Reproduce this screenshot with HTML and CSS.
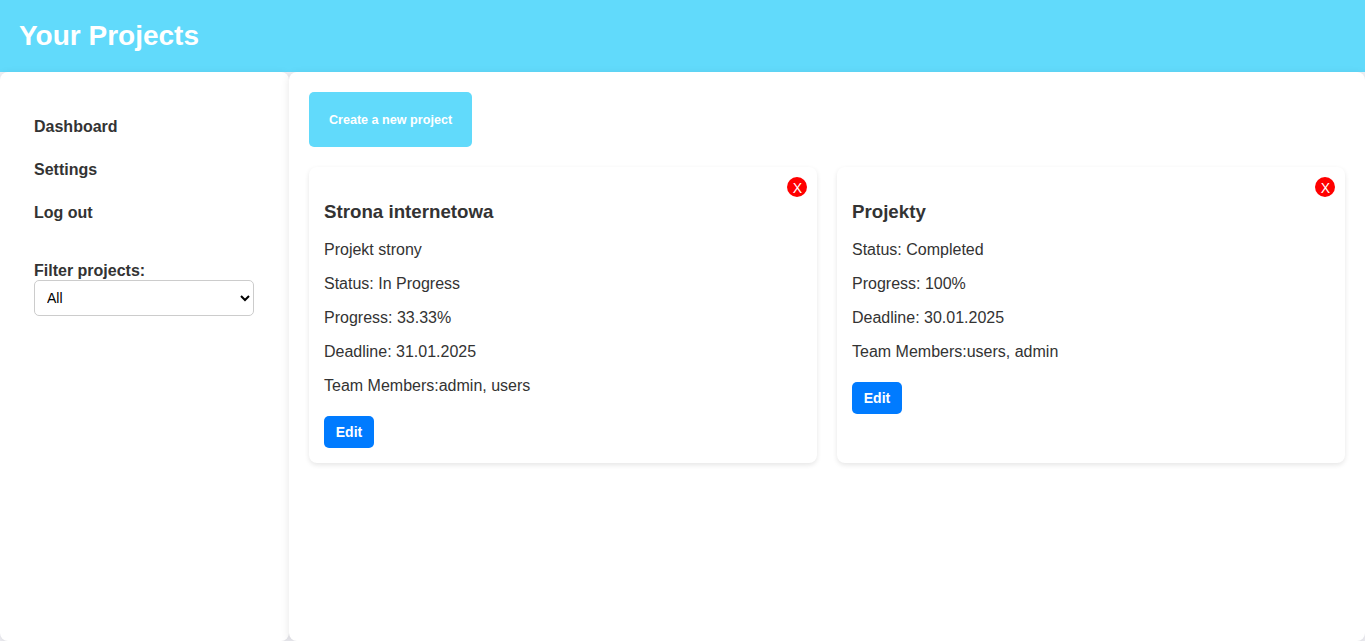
FILE: index.html
```html
<!DOCTYPE html>
<html lang="en">
<head>
<meta charset="utf-8">
<title>Your Projects</title>
<link rel="stylesheet" href="styles.css">
</head>
<body>
<header class="header"><h1>Your Projects</h1></header>
<div class="layout">
  <aside class="sidebar">
    <nav class="menu">
      <a>Dashboard</a>
      <a>Settings</a>
      <a>Log out</a>
    </nav>
    <label class="filter-label" for="filter">Filter projects:</label>
    <select class="filter" id="filter"><option>All</option><option>In Progress</option><option>Completed</option></select>
  </aside>
  <main class="content">
    <button class="create">Create a new project</button>
    <div class="grid">
      <article class="card">
        <button class="close">X</button>
        <h3>Strona internetowa</h3>
        <p>Projekt strony</p>
        <p>Status: In Progress</p>
        <p>Progress: 33.33%</p>
        <p>Deadline: 31.01.2025</p>
        <p>Team Members:admin, users</p>
        <button class="edit">Edit</button>
      </article>
      <article class="card">
        <button class="close">X</button>
        <h3>Projekty</h3>
        <p>Status: Completed</p>
        <p>Progress: 100%</p>
        <p>Deadline: 30.01.2025</p>
        <p>Team Members:users, admin</p>
        <button class="edit">Edit</button>
      </article>
    </div>
  </main>
</div>
</body>
</html>
```
FILE: styles.css
```css
* { box-sizing: border-box; }
body {
  margin: 0;
  height: 100vh;
  display: flex;
  flex-direction: column;
  overflow: hidden;
  font-family: Arial, "Liberation Sans", sans-serif;
  font-size: 16px;
  color: #333;
  background: #f0f0f5;
}
button, select { font-family: inherit; }
.header {
  height: 72px;
  flex: none;
  display: flex;
  align-items: center;
  padding: 0 19px;
  background: #61dafb;
  color: #fff;
}
.header h1 { margin: 0; font-size: 28px; line-height: 32px; }
.layout { flex: 1; display: flex; }
.sidebar {
  width: 289px;
  flex: none;
  padding: 46px 35px 0 34px;
  background: #fff;
  border-radius: 8px;
  box-shadow: 0 2px 8px rgba(0, 0, 0, 0.1);
}
.menu { display: flex; flex-direction: column; gap: 25px; font-weight: bold; line-height: 18px; }
.filter-label { display: block; margin-top: 40px; font-weight: bold; line-height: 18px; }
.filter {
  display: block;
  width: 220px;
  height: 36px;
  padding: 8px;
  border: 1px solid #ccc;
  border-radius: 5px;
  background: #fff;
  font-size: 14px;
  color: #000;
}
.content {
  flex: 1;
  padding: 20px;
  background: #fff;
  border-radius: 8px;
  box-shadow: 0 2px 8px rgba(0, 0, 0, 0.1);
}
.create {
  display: block;
  width: 163px;
  height: 55px;
  padding: 0;
  border: 0;
  border-radius: 5px;
  background: #61dafb;
  color: #fff;
  font-size: 12.6px;
  font-weight: bold;
}
.grid { display: grid; grid-template-columns: 1fr 1fr; gap: 20px; margin-top: 20px; }
.card {
  position: relative;
  min-height: 296px;
  padding: 34px 15px 15px;
  background: #fff;
  border-radius: 8px;
  box-shadow: 0 2px 5px rgba(0, 0, 0, 0.1);
}
.card h3 { margin: 0 0 19px; font-size: 18.72px; line-height: 21px; }
.card p { margin: 0 0 16px; line-height: 18px; }
.close {
  position: absolute;
  top: 10px;
  right: 10px;
  width: 20px;
  height: 20px;
  padding: 2px 0 0 1px;
  border: 0;
  border-radius: 50%;
  background: red;
  color: #fff;
  font-size: 14px;
  line-height: 18px;
}
.edit {
  display: block;
  margin-top: 21px;
  width: 50px;
  height: 32px;
  padding: 0;
  border: 0;
  border-radius: 5px;
  background: #007bff;
  color: #fff;
  font-size: 14px;
  font-weight: bold;
}
```
